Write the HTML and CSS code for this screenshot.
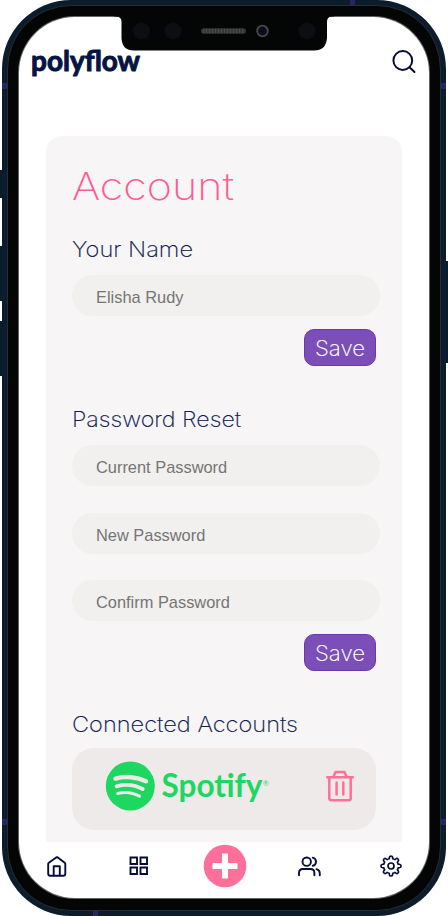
FILE: index.html
```html
<!DOCTYPE html>
<html lang="en">
<head>
<meta charset="utf-8">
<title>polyflow – Account</title>
<link rel="stylesheet" href="styles.css">
</head>
<body>
<div class="device">
  <i class="key mute"></i><i class="key up"></i><i class="key down"></i><i class="key power"></i>
  <i class="band b1"></i><i class="band b2"></i><i class="band b3"></i><i class="band b4"></i><i class="band b5"></i><i class="band b6"></i>
  <div class="bezel">
    <div class="screen">
      <header class="topbar">
        <svg class="logo" width="114" height="40" viewBox="0 0 114 40" role="img" aria-label="polyflow"><text x="1" y="25" textLength="109" lengthAdjust="spacingAndGlyphs">polyflow</text></svg>
        <svg class="search" width="24" height="24" viewBox="0 0 24 24"><circle cx="10.8" cy="10.5" r="9.4"/><path d="M17.5 17.2L22.5 22"/></svg>
      </header>
      <main class="card">
        <h1><svg width="170" height="52"><text x="0" y="37" textLength="162" lengthAdjust="spacingAndGlyphs">Account</text></svg></h1>
        <section class="name">
          <h2><svg width="240" height="28"><text x="0" y="21.7" textLength="121" lengthAdjust="spacingAndGlyphs">Your Name</text></svg></h2>
          <div class="field">Elisha Rudy</div>
          <button class="save"><svg width="52" height="28"><text x="1" y="22" textLength="50" lengthAdjust="spacingAndGlyphs">Save</text></svg></button>
        </section>
        <section class="password">
          <h2><svg width="240" height="28"><text x="0" y="21.7" textLength="169" lengthAdjust="spacingAndGlyphs">Password Reset</text></svg></h2>
          <div class="field">Current Password</div>
          <div class="field">New Password</div>
          <div class="field">Confirm Password</div>
          <button class="save"><svg width="52" height="28"><text x="1" y="22" textLength="50" lengthAdjust="spacingAndGlyphs">Save</text></svg></button>
        </section>
        <section class="accounts">
          <h2><svg width="240" height="28"><text x="0" y="21.7" textLength="226" lengthAdjust="spacingAndGlyphs">Connected Accounts</text></svg></h2>
          <div class="account">
            <svg class="spotify" width="166" height="52" viewBox="0 0 166 52">
              <circle cx="25.3" cy="25" r="24.5" fill="#1ed760"/>
              <g fill="none" stroke="#eeeae9" stroke-linecap="round"><path d="M10.5 17.6C20 14.8 32 15.8 41 20.2" stroke-width="4.4"/><path d="M11.6 25.3C20 23 30 24 37.7 28" stroke-width="3.8"/><path d="M12.7 32.4C20 30.7 28 31.6 34.4 35.2" stroke-width="3.1"/></g>
              <text class="brand" x="56.5" y="36" textLength="101" lengthAdjust="spacingAndGlyphs">Spotify</text><text class="reg" x="158" y="25">®</text>
            </svg>
            <svg class="trash" width="28" height="32" viewBox="0 0 28 32"><path d="M1.2 7.2H26.8M3.3 7.2V28.2Q3.3 30.2 5.3 30.2H22.7Q24.7 30.2 24.7 28.2V7.2M7.4 7L9.5 2H18.5L20.6 7M10.6 12.5V24.5M17.3 12.5V24.5"/></svg>
          </div>
        </section>
      </main>
      <nav class="tabs">
        <svg class="ico home" width="20" height="21" viewBox="0 0 20 21"><path d="M1.2 8Q1.2 7.2 1.8 6.8L9.2 1.5L10 1.2L10.8 1.5L17.7 6.8Q18.3 7.2 18.3 8V17.8Q18.3 19.8 16.3 19.8H3.2Q1.2 19.8 1.2 17.8ZM6.7 19.5V10.3H12.8V19.5"/></svg>
        <svg class="ico grid" width="20" height="20" viewBox="0 0 20 20"><path d="M1.5 1.5H8V8H1.5ZM11.5 1.5H18V8H11.5ZM1.5 11.5H8V18H1.5ZM11.5 11.5H18V18H11.5Z"/></svg>
        <svg class="add" width="44" height="44" viewBox="0 0 44 44"><circle cx="22" cy="22" r="21.3" fill="#ff6f9c"/><path d="M22 12.5V31.5M12.5 22H31.5" stroke="#fff" stroke-width="6" stroke-linecap="square"/></svg>
        <svg class="ico users" width="23" height="21" viewBox="0 0 23 21"><circle cx="8.7" cy="5.7" r="4.2"/><path d="M1 19.2V17Q1 13 5 13H12.3Q16.4 13 16.4 17V19.2M14.7 1.6A4.2 4.2 0 0 1 14.7 9.8M18.5 13.2Q21.8 14 21.8 17.4V19.2"/></svg>
        <svg class="ico gear" width="22" height="22" viewBox="0 0 22 22"><path d="M9.2 3.8L9.5 2Q9.7 1 11 1Q12.3 1 12.5 2L12.8 3.8Q14 4.1 14.8 4.6L16.2 3.6Q17 3 18 4Q19 5 18.4 5.8L17.4 7.2Q17.9 8 18.2 9.2L20 9.5Q21 9.7 21 11Q21 12.3 20 12.5L18.2 12.8Q17.9 14 17.4 14.8L18.4 16.2Q19 17 18 18Q17 19 16.2 18.4L14.8 17.4Q14 17.9 12.8 18.2L12.5 20Q12.3 21 11 21Q9.7 21 9.5 20L9.2 18.2Q8 17.9 7.2 17.4L5.8 18.4Q5 19 4 18Q3 17 3.6 16.2L4.6 14.8Q4.1 14 3.8 12.8L2 12.5Q1 12.3 1 11Q1 9.7 2 9.5L3.8 9.2Q4.1 8 4.6 7.2L3.6 5.8Q3 5 4 4Q5 3 5.8 3.6L7.2 4.6Q8 4.1 9.2 3.8Z"/><circle cx="11" cy="11" r="3"/></svg>
      </nav>
    </div>
  </div>
  <svg class="notch" width="224" height="52" viewBox="0 0 224 52">
    <path d="M0 10H220V16.5H218Q213 16.5 213 22V38Q212 50.5 200 50.5H20Q8 50.5 7.5 38V22Q7.5 16.5 2 16.5H0Z" fill="#040606"/>
    <g fill="#0d0d14"><circle cx="27.5" cy="31" r="8.5"/><circle cx="59" cy="31" r="8.5"/><circle cx="193" cy="31" r="8.5"/></g>
    <rect x="87" y="28.2" width="45" height="5.6" rx="2.8" fill="#373737"/><path d="M89 31H130" stroke="#4b4b4b" stroke-width="4" stroke-dasharray="1 2"/>
    <circle cx="148.5" cy="31" r="5.3" fill="#080d1e" stroke="#484848" stroke-width="1.8"/>
  </svg>
</div>
</body>
</html>
```
FILE: styles.css
```css
* { box-sizing: border-box; }
body { margin: 0; background: #fff; overflow: hidden; font-family: "Liberation Sans", sans-serif; color: #060d3a; }
svg { display: block; }
.device { position: relative; width: 444px; height: 916px; margin-left: 2px; padding: 5px; border-radius: 69px; background: #0b1d2c; }
.bezel { height: 906px; border-radius: 64px; background: #040606; border: 1px solid #292c30; padding: 10.5px 11px 11px; }
.screen { height: 881.5px; border-radius: 56px; background: #fff; overflow: hidden; display: flex; flex-direction: column; box-shadow: 0 0 0 1px #636464; }
.key { position: absolute; width: 3px; left: -2px; background: #0b1d2c; }
.mute { top: 170px; height: 28px; }
.up { top: 246px; height: 55px; }
.down { top: 321px; height: 55px; }
.power { left: 443px; top: 261px; height: 102px; }
.band { position: absolute; width: 5px; height: 6px; background: #29246a; }
.b1 { left: 0; top: 83px; }
.b2 { left: 439px; top: 83px; }
.b3 { left: 0; top: 819px; }
.b4 { left: 439px; top: 819px; }
.b5 { left: 348px; top: 0; height: 5px; }
.b6 { left: 91px; top: 911px; height: 5px; }
.notch { position: absolute; left: 112px; top: 0; }
.topbar { height: 119.5px; flex: none; display: flex; justify-content: space-between; padding: 29px 13.5px 0 11px; }
.logo text { font: 700 28px "Lato", sans-serif; fill: #061442; stroke: #061442; stroke-width: 1; stroke-linejoin: round; }
.search { margin-top: 4.5px; fill: none; stroke: #060d3a; stroke-width: 2; stroke-linecap: round; }
.card { height: 706px; flex: none; margin: 0 27px; padding: 27px 22px 0 26px; border-radius: 16px 16px 0 0; background: #f7f5f6; overflow: hidden; }
h1, h2 { margin: 0; font-weight: 300; }
h1 { height: 72px; }
h1 text { font: 200 37.5px "Inter", sans-serif; fill: #ff5c91; }
h2 { height: 40px; }
h2 text { font: 200 21px "Inter", sans-serif; fill: #101c50; stroke: #101c50; stroke-width: .15; }
.field { height: 41px; border-radius: 21px; background: #f1f0ee; padding: 2px 24px 0; font-size: 16.4px; line-height: 41px; color: #757575; }
.password .field + .field { margin-top: 26.5px; }
.save { display: block; width: 72px; height: 37px; margin: 13px 4px 0 auto; padding: 3px 9px; border: 1px solid #6b38b0; border-radius: 10px; background: #7b4fb7; }
.save text { font: 200 21px "Inter", sans-serif; fill: #fff; stroke: #fff; stroke-width: .15; }
.name { height: 170px; }
.password { height: 305px; }
.account { width: 304px; height: 82px; border-radius: 22px; background: #eeeae9; display: flex; justify-content: space-between; padding: 13px 22px 0 33px; margin-top: -2px; }
.brand { font: 700 32px "Lato", sans-serif; fill: #1ed760; }
.reg { font: 7px "Lato", sans-serif; fill: #1ed760; }
.trash { margin-top: 9px; fill: none; stroke: #ff6f9c; stroke-width: 2.5; stroke-linejoin: round; stroke-linecap: round; }
.tabs { height: 56px; flex: none; display: grid; grid-template-columns: 82px 74px 95px 82px 22px; align-items: start; padding: 2px 27px 0 28px; }
.ico { margin-top: 12px; fill: none; stroke: #060d3a; stroke-width: 1.9; stroke-linecap: round; stroke-linejoin: round; }
.grid { stroke-linejoin: miter; }
.gear { margin-top: 11px; stroke-width: 1.7; }
```
